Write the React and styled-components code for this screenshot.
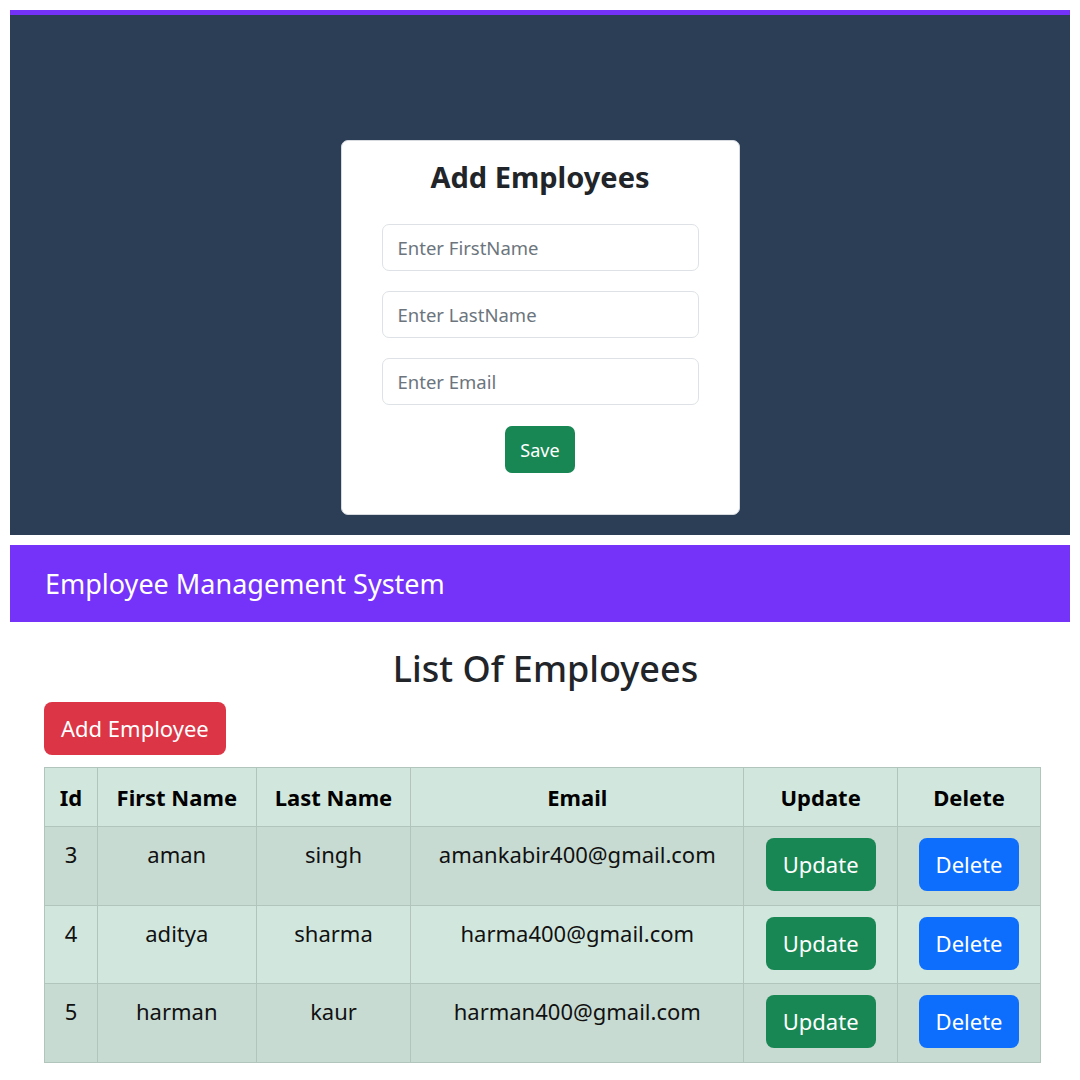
import React from "react";
import styled, { createGlobalStyle } from "styled-components";

const GlobalStyle = createGlobalStyle`
  * { box-sizing: border-box; }
  body {
    margin: 0;
    background: #fff;
    font-family: "Noto Sans", "Open Sans", sans-serif;
    color: #212529;
  }
`;

const employees = [
  { id: 3, firstName: "aman", lastName: "singh", email: "amankabir400@gmail.com" },
  { id: 4, firstName: "aditya", lastName: "sharma", email: "harma400@gmail.com" },
  { id: 5, firstName: "harman", lastName: "kaur", email: "harman400@gmail.com" },
];

const Page = styled.div`
  padding: 10px 10px 0;
`;

const FormPanel = styled.section`
  background: #2c3e56;
  border-top: 5px solid #7432f9;
  height: 525px;
  padding-top: 125px;
  display: flex;
  justify-content: center;
  align-items: flex-start;
`;

const Card = styled.form`
  width: 399px;
  background: #fff;
  border: 1px solid #d7dbe0;
  border-radius: 7px;
  padding: 18px 40px 41px;
  display: flex;
  flex-direction: column;
  align-items: center;
`;

const CardTitle = styled.h3`
  margin: 0 0 29px;
  font-size: 29px;
  font-weight: 700;
  line-height: 36px;
  color: #212529;
`;

const Input = styled.input`
  width: 100%;
  height: 47px;
  margin-bottom: 20px;
  padding: 0 15px;
  border: 1px solid #dee2e6;
  border-radius: 7px;
  font-family: inherit;
  font-size: 18.5px;
  color: #212529;
  &::placeholder { color: #6c757d; }
`;

const Button = styled.button`
  border: 1px solid transparent;
  border-radius: ${(p) => (p.$small ? "7px" : "8px")};
  background: ${(p) => p.$bg};
  color: #fff;
  font-family: inherit;
  font-size: ${(p) => (p.$small ? "18px" : "22px")};
  line-height: ${(p) => (p.$small ? "28px" : "33px")};
  padding: ${(p) => (p.$small ? "8.5px 14px" : "9px 16px")};
  margin-top: ${(p) => (p.$small ? "1px" : "0")};
  cursor: pointer;
`;

const Gap = styled.div`
  height: 10px;
`;

const Navbar = styled.nav`
  height: 77px;
  background: #7532f9;
  display: flex;
  align-items: center;
  padding-left: 35px;
  color: #fff;
  font-size: 27px;
`;

const Container = styled.main`
  padding: 0 29px 0 34px;
`;

const ListTitle = styled.h2`
  margin: 24px 0 10px;
  text-align: center;
  font-size: 36px;
  font-weight: 500;
  line-height: 46px;
  color: #212529;
  padding-left: 6px;
`;

const ActionRow = styled.div`
  margin-bottom: 12px;
`;

const Table = styled.table`
  width: 997px;
  border-collapse: collapse;
  font-size: 22px;
  line-height: 33px;
`;

const Th = styled.th`
  width: ${(p) => p.$w}px;
  background: #d1e7dd;
  border: 1.4px solid #b2c5bc;
  padding: 13px 8px 12px;
  font-weight: 700;
  color: #000;
`;

const Row = styled.tr`
  background: ${(p) => (p.$striped ? "#c7dbd2" : "#d1e7dd")};
`;

const Td = styled.td`
  border: 1.4px solid #b2c5bc;
  padding: 11px 8px 12px;
  text-align: center;
  vertical-align: top;
  color: #111;
  height: 78.7px;
`;

const columns = [
  ["Id", 53],
  ["First Name", 159],
  ["Last Name", 155],
  ["Email", 333],
  ["Update", 154],
  ["Delete", 143],
];

export default function App() {
  return (
    <Page>
      <GlobalStyle />
      <FormPanel>
        <Card onSubmit={(e) => e.preventDefault()}>
          <CardTitle>Add Employees</CardTitle>
          <Input placeholder="Enter FirstName" />
          <Input placeholder="Enter LastName" />
          <Input placeholder="Enter Email" />
          <Button $small $bg="#198754">Save</Button>
        </Card>
      </FormPanel>
      <Gap />
      <Navbar>Employee Management System</Navbar>
      <Container>
        <ListTitle>List Of Employees</ListTitle>
        <ActionRow>
          <Button $bg="#dc3545">Add Employee</Button>
        </ActionRow>
        <Table>
          <thead>
            <tr>
              {columns.map(([label, w]) => (
                <Th key={label} $w={w}>{label}</Th>
              ))}
            </tr>
          </thead>
          <tbody>
            {employees.map((emp, i) => (
              <Row key={emp.id} $striped={i % 2 === 0}>
                <Td>{emp.id}</Td>
                <Td>{emp.firstName}</Td>
                <Td>{emp.lastName}</Td>
                <Td>{emp.email}</Td>
                <Td><Button $bg="#198754">Update</Button></Td>
                <Td><Button $bg="#0d6efd">Delete</Button></Td>
              </Row>
            ))}
          </tbody>
        </Table>
      </Container>
    </Page>
  );
}
